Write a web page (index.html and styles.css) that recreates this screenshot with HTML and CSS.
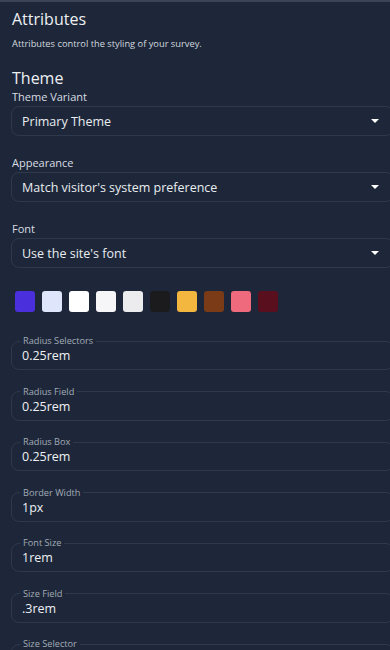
FILE: index.html
```html
<!DOCTYPE html>
<html lang="en">
<head>
<meta charset="utf-8">
<title>Attributes</title>
<link rel="stylesheet" href="styles.css">
</head>
<body>
<div class="panel">
  <h1 class="title">Attributes</h1>
  <p class="subtitle">Attributes control the styling of your survey.</p>

  <h2 class="section">Theme</h2>

  <div class="field">
    <div class="label">Theme Variant</div>
    <div class="select"><span>Primary Theme</span><span class="caret"></span></div>
  </div>
  <div class="field">
    <div class="label">Appearance</div>
    <div class="select"><span>Match visitor's system preference</span><span class="caret"></span></div>
  </div>
  <div class="field">
    <div class="label">Font</div>
    <div class="select"><span>Use the site's font</span><span class="caret"></span></div>
  </div>

  <div class="swatches">
    <span class="swatch c1"></span>
    <span class="swatch c2"></span>
    <span class="swatch c3"></span>
    <span class="swatch c4"></span>
    <span class="swatch c5"></span>
    <span class="swatch c6"></span>
    <span class="swatch c7"></span>
    <span class="swatch c8"></span>
    <span class="swatch c9"></span>
    <span class="swatch c10"></span>
  </div>

  <fieldset class="box"><legend>Radius Selectors</legend><div class="value">0.25rem</div></fieldset>
  <fieldset class="box"><legend>Radius Field</legend><div class="value">0.25rem</div></fieldset>
  <fieldset class="box"><legend>Radius Box</legend><div class="value">0.25rem</div></fieldset>
  <fieldset class="box"><legend>Border Width</legend><div class="value">1px</div></fieldset>
  <fieldset class="box"><legend>Font Size</legend><div class="value">1rem</div></fieldset>
  <fieldset class="box"><legend>Size Field</legend><div class="value">.3rem</div></fieldset>
  <fieldset class="box"><legend>Size Selector</legend><div class="value">.25rem</div></fieldset>
</div>
</body>
</html>
```
FILE: styles.css
```css
html, body {
  margin: 0;
  padding: 0;
  background: #1d2739;
  overflow: hidden;
}
body {
  font-family: "Open Sans", "Noto Sans", "Liberation Sans", sans-serif;
  color: #e6e9ee;
  border-top: 2px solid #3a4456;
  height: 648px;
}
.panel {
  padding: 0 0 0 11px;
  width: 383px;
}
.title {
  margin: 6px 0 0 1px;
  font-size: 16px;
  line-height: 22px;
  font-weight: 400;
  color: #eef0f4;
}
.subtitle {
  margin: 8px 0 0 1px;
  font-size: 9.3px;
  line-height: 12px;
  color: #d3d8df;
}
.section {
  margin: 17px 0 0 1px;
  font-size: 16px;
  line-height: 22px;
  font-weight: 400;
  color: #eef0f4;
}
.field {
  margin-top: 1px;
}
.field + .field {
  margin-top: 20px;
}
.label {
  margin-left: 1px;
  font-size: 11px;
  line-height: 14px;
  color: #d9dde3;
}
.select {
  margin-top: 2px;
  height: 28px;
  border: 1px solid #2e394c;
  border-radius: 8px;
  padding: 0 14px 0 10px;
  display: flex;
  align-items: center;
  justify-content: space-between;
  font-size: 12.5px;
  color: #e9ecf0;
}
.caret {
  width: 0;
  height: 0;
  border-left: 4px solid transparent;
  border-right: 4px solid transparent;
  border-top: 4px solid #ffffff;
}
.swatches {
  display: flex;
  gap: 7px;
  margin: 23px 0 0 4px;
}
.swatch {
  width: 20px;
  height: 21px;
  border-radius: 3px;
  display: block;
}
.c1 { background: #4a2fdc; }
.c2 { background: #dfe6fc; }
.c3 { background: #ffffff; }
.c4 { background: #f6f6f9; }
.c5 { background: #ececee; }
.c6 { background: #1b1b1e; }
.c7 { background: #f3b63f; }
.c8 { background: #7c3b17; }
.c9 { background: #ee6a7c; }
.c10 { background: #590f1d; }

.box {
  margin: 23px 0 0 0;
  padding: 1px 10px 5px 10px;
  border: 1px solid #2e394c;
  border-radius: 8px;
  min-width: 0;
}
.box + .box {
  margin-top: 15.5px;
}
.box legend {
  padding: 0 3px;
  margin-left: -2px;
  font-size: 9.2px;
  line-height: 12px;
  color: #a3abb7;
}
.value {
  font-size: 12.5px;
  line-height: 16px;
  color: #eef0f4;
}
```
